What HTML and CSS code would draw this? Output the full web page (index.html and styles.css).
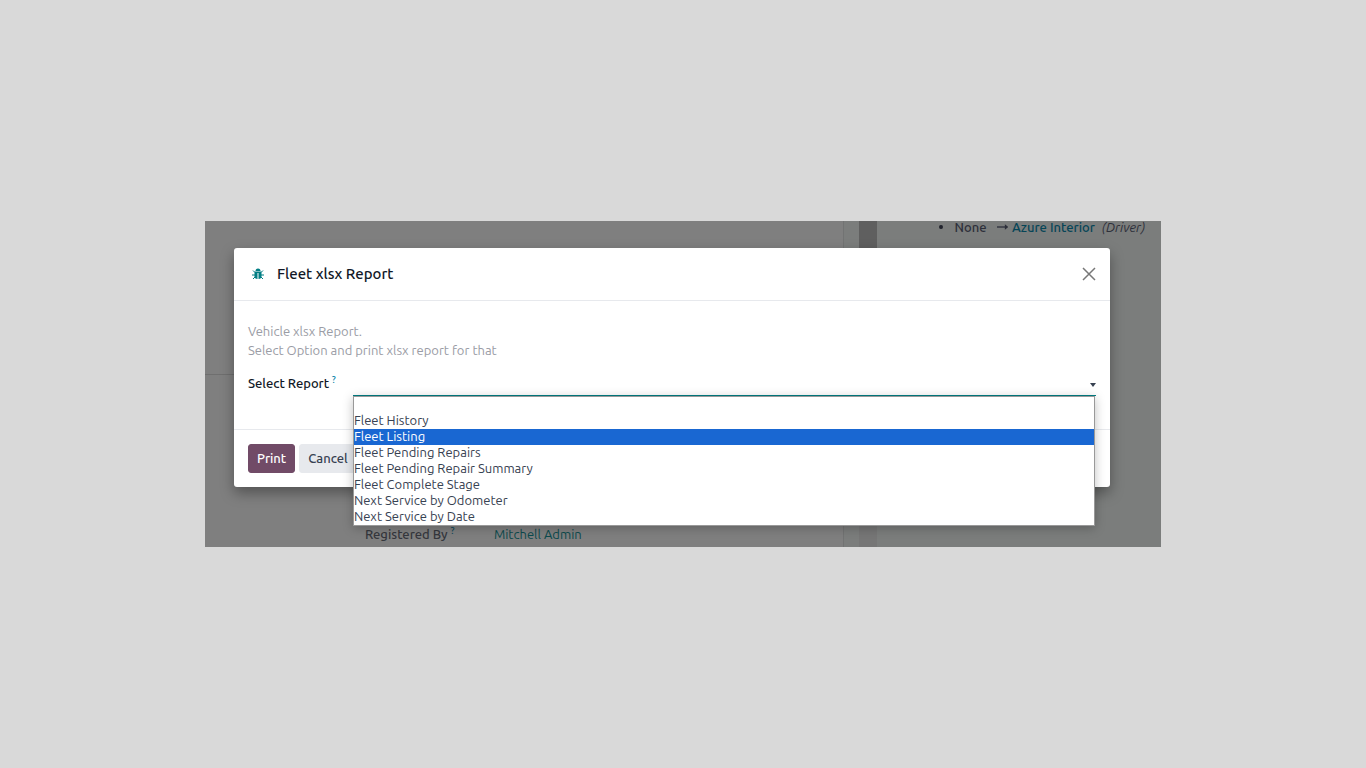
FILE: index.html
```html
<!DOCTYPE html>
<html lang="en">
<head>
<meta charset="utf-8">
<meta name="viewport" content="width=device-width, initial-scale=1">
<title>Fleet xlsx Report</title>
<link rel="stylesheet" href="styles.css">
</head>
<body>
<main class="stage">
  <div class="backdrop">
    <section class="form-pane">
      <div class="form-rule"></div>
      <div class="form-row">
        <span class="form-label">Registered By <sup class="hint">?</sup></span>
        <a class="form-value" href="#">Mitchell Admin</a>
      </div>
    </section>
    <div class="gutter"></div>
    <div class="scrollbar"><div class="thumb"></div></div>
    <aside class="chatter">
      <ul class="log">
        <li class="log-item">
          <span class="old">None</span>
          <svg class="arrow" viewBox="0 0 13 8" aria-hidden="true"><path d="M0 4h10" stroke="currentColor" stroke-width="1.5"/><path d="M9 1l4 3-4 3z" fill="currentColor"/></svg>
          <a class="new" href="#">Azure Interior</a>
          <em class="field-name">(Driver)</em>
        </li>
      </ul>
    </aside>
  </div>

  <div class="dialog" role="dialog" aria-labelledby="dialog-title">
    <header class="dialog-head">
      <svg class="bug" viewBox="0 0 24 24" aria-hidden="true">
        <path d="M7 6a5 5 0 0 1 10 0z" fill="currentColor"/>
        <path d="M5 7h14v10c0 3-2 5-6 5V10h-2v12c-4 0-6-2-6-5z" fill="currentColor"/>
        <path d="M6 9L2 5M18 9l4-4M6 14H0M18 14h6M6 18l-4 4M18 18l4 4" stroke="currentColor" stroke-width="2" fill="none"/>
      </svg>
      <h1 class="title" id="dialog-title">Fleet xlsx Report</h1>
      <button class="close" type="button" aria-label="Close">
        <svg viewBox="0 0 14 14" aria-hidden="true"><path d="M1 1l12 12M13 1L1 13" stroke="currentColor" stroke-width="1.5" fill="none"/></svg>
      </button>
    </header>
    <div class="dialog-body">
      <p class="intro">Vehicle xlsx Report.<br>Select Option and print xlsx report for that</p>
      <div class="field">
        <label class="label" for="report">Select Report <sup class="hint">?</sup></label>
        <div class="control">
          <select class="select" id="report">
            <option selected></option>
            <option>Fleet History</option>
            <option>Fleet Listing</option>
            <option>Fleet Pending Repairs</option>
            <option>Fleet Pending Repair Summary</option>
            <option>Fleet Complete Stage</option>
            <option>Next Service by Odometer</option>
            <option>Next Service by Date</option>
          </select>
          <svg class="caret" viewBox="0 0 6 4" aria-hidden="true"><path d="M0 0h6L3 4z" fill="currentColor"/></svg>
          <ul class="menu" role="listbox" aria-label="Select Report">
            <li class="item" role="option"></li>
            <li class="item" role="option">Fleet History</li>
            <li class="item active" role="option" aria-selected="true">Fleet Listing</li>
            <li class="item" role="option">Fleet Pending Repairs</li>
            <li class="item" role="option">Fleet Pending Repair Summary</li>
            <li class="item" role="option">Fleet Complete Stage</li>
            <li class="item" role="option">Next Service by Odometer</li>
            <li class="item" role="option">Next Service by Date</li>
          </ul>
        </div>
      </div>
    </div>
    <footer class="dialog-foot">
      <button class="btn primary" type="button">Print</button>
      <button class="btn" type="button">Cancel</button>
    </footer>
  </div>
</main>
</body>
</html>
```
FILE: styles.css
```css
* { box-sizing: border-box; }

body {
  margin: 0;
  min-height: 100vh;
  display: grid;
  place-content: center;
  grid-template-columns: 70%;
  background: #d9d9d9;
  color: #374151;
  font: 13px/16px Ubuntu, "Noto Sans", sans-serif;
}

h1, p, ul { margin: 0; padding: 0; }
ul { list-style: none; }
a { text-decoration: none; }
button, select { font: inherit; }

.stage {
  display: grid;
  overflow: hidden;
  background: #7f7f7f;
}

.backdrop, .dialog { grid-area: 1 / 1; }

/* Dimmed page */
.backdrop {
  display: grid;
  grid-template-columns: minmax(0, 639fr) 15px 18px minmax(0, 284fr);
}

.form-pane {
  display: flex;
  flex-direction: column;
  justify-content: space-between;
  padding: 153px 0 5px;
  border-right: 1px solid #727373;
}

.form-rule { border-top: 1px solid #6f6f6f; }

.form-row {
  display: grid;
  grid-template-columns: 129px 1fr;
  padding-left: 160px;
}

.form-label { color: #35373d; font-weight: 500; }
.form-value { color: #0b4a4d; }

.hint {
  color: #0180a5;
  font-size: 9px;
  line-height: 0;
}

.form-label .hint { color: #0b4658; }

.gutter, .chatter { background: #7b7d7c; }
.scrollbar { background: #767676; }
.thumb { height: 60px; background: #5f5f5f; }

.chatter { padding: 0 16px 0 62px; }

.log-item {
  display: flex;
  align-items: center;
  height: 11px;
  white-space: nowrap;
  color: #2d2f3a;
}

.log-item::before {
  content: "";
  width: 4px;
  height: 4px;
  margin-right: 12px;
  border-radius: 50%;
  background: #22242e;
}

.old { font-weight: 500; }
.arrow { width: 13px; height: 8px; margin: 0 4px 0 10px; }
.new { color: #064557; font-weight: 500; }
.field-name { margin-left: 7px; }

/* Dialog */
.dialog {
  align-self: start;
  margin: 27px 51px 60px 29px;
  border-radius: 3px;
  background: #fff;
  box-shadow: 0 6px 14px rgba(0, 0, 0, .35);
}

.dialog-head {
  display: flex;
  align-items: center;
  height: 53px;
  padding: 0 14px 0 18px;
  border-bottom: 1px solid #e7e9ed;
}

.bug { width: 12px; height: 12px; color: #017e84; }

.title {
  flex: 1;
  margin-left: 13px;
  color: #111827;
  font-size: 15px;
  font-weight: 500;
  line-height: 20px;
}

.close {
  display: flex;
  padding: 0;
  border: 0;
  background: none;
  color: #777;
}

.close svg { width: 14px; height: 14px; }

.dialog-body { padding: 21px 14px 33px; }

.intro { color: #9a9ca5; line-height: 19px; }

.field {
  display: grid;
  grid-template-columns: 105px 1fr;
  align-items: center;
  margin-top: 12px;
}

.label {
  padding-bottom: 2px;
  color: #111827;
  font-weight: 500;
}

.control { position: relative; }

.select {
  display: block;
  width: 100%;
  height: 24px;
  padding: 0 16px 0 0;
  border: 0;
  border-bottom: 1px solid #017e84;
  border-radius: 0;
  outline: 0;
  appearance: none;
  background: none;
  color: #374151;
}

.caret {
  position: absolute;
  top: 11px;
  right: 0;
  width: 6px;
  height: 4px;
  color: #374151;
  pointer-events: none;
}

.menu {
  position: absolute;
  top: 100%;
  left: 0;
  right: 1px;
  border: 1px solid #999;
  background: #fff;
  box-shadow: 0 2px 10px rgba(0, 0, 0, .25);
}

.item {
  height: 16px;
  line-height: 14px;
  white-space: nowrap;
}

.item.active { background: #1967d2; color: #fff; }

.dialog-foot {
  display: flex;
  gap: 4px;
  padding: 14px;
  border-top: 1px solid #e7e9ed;
}

.btn {
  height: 29px;
  padding: 0 8px 2px;
  border: 1px solid #e7e9ed;
  border-radius: 3px;
  background: #e7e9ed;
  color: #374151;
  font-weight: 500;
}

.btn.primary {
  border-color: #714b67;
  background: #714b67;
  color: #fff;
}
```
